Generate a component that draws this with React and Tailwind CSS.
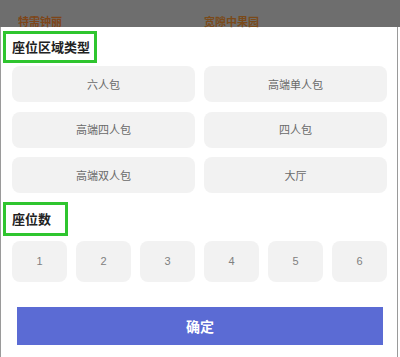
export default function App() {
  const types = ["六人包", "高端单人包", "高端四人包", "四人包", "高端双人包", "大厅"];
  const nums = ["1", "2", "3", "4", "5", "6"];
  return (
    <div
      className="w-[400px] h-[357px] bg-[#6e6e6e] overflow-hidden flex flex-col"
      style={{ fontFamily: '"Noto Sans CJK SC", "Noto Sans", sans-serif' }}
    >
      <div className="h-[27px] relative shrink-0">
        <div className="absolute left-[18px] top-[15px] text-[11px] leading-[12px] text-[#7e4518] font-bold">特需钟丽</div>
        <div className="absolute left-[204px] top-[15px] text-[11px] leading-[12px] text-[#7a4a1a] font-bold">宽隙中果园</div>
      </div>
      <div className="flex flex-1 bg-white">
        <div className="w-[1px] bg-[#9a9a9a]" />
        <div className="w-[396px] bg-white rounded-t-[8px] pl-[2px] pr-[10px] flex flex-col">
          <div className="mt-[4px] w-[94px] h-[32px] border-[3px] border-[#2fc52f] flex items-center pl-[6px] text-[13px] font-bold text-[#222]">
            座位区域类型
          </div>
          <div className="mt-[3px] ml-[9px] grid grid-cols-2 gap-x-[9px] gap-y-[9.5px]">
            {types.map((t) => (
              <div
                key={t}
                className="h-[36px] rounded-[8px] bg-[#f2f2f2] flex items-center justify-center text-[11px] text-[#6a6a6a]"
              >
                {t}
              </div>
            ))}
          </div>
          <div className="mt-[9px] w-[65px] h-[34px] border-[3px] border-[#2fc52f] flex items-center pl-[6px] text-[13px] font-bold text-[#222]">
            座位数
          </div>
          <div className="mt-[5px] ml-[9px] grid grid-cols-6 gap-x-[9px]">
            {nums.map((n) => (
              <div
                key={n}
                className="h-[41px] rounded-[8px] bg-[#f2f2f2] flex items-center justify-center text-[11px] text-[#808080]"
                style={{ fontFamily: '"Liberation Sans", sans-serif' }}
              >
                {n}
              </div>
            ))}
          </div>
          <div className="mt-[25px] ml-[14px] mr-[4px] h-[38px] bg-[#5b6bd4] flex items-center justify-center text-[14px] font-bold text-white">
            确定
          </div>
        </div>
        <div className="w-[1px] bg-[#9a9a9a]" />
      </div>
    </div>
  );
}
